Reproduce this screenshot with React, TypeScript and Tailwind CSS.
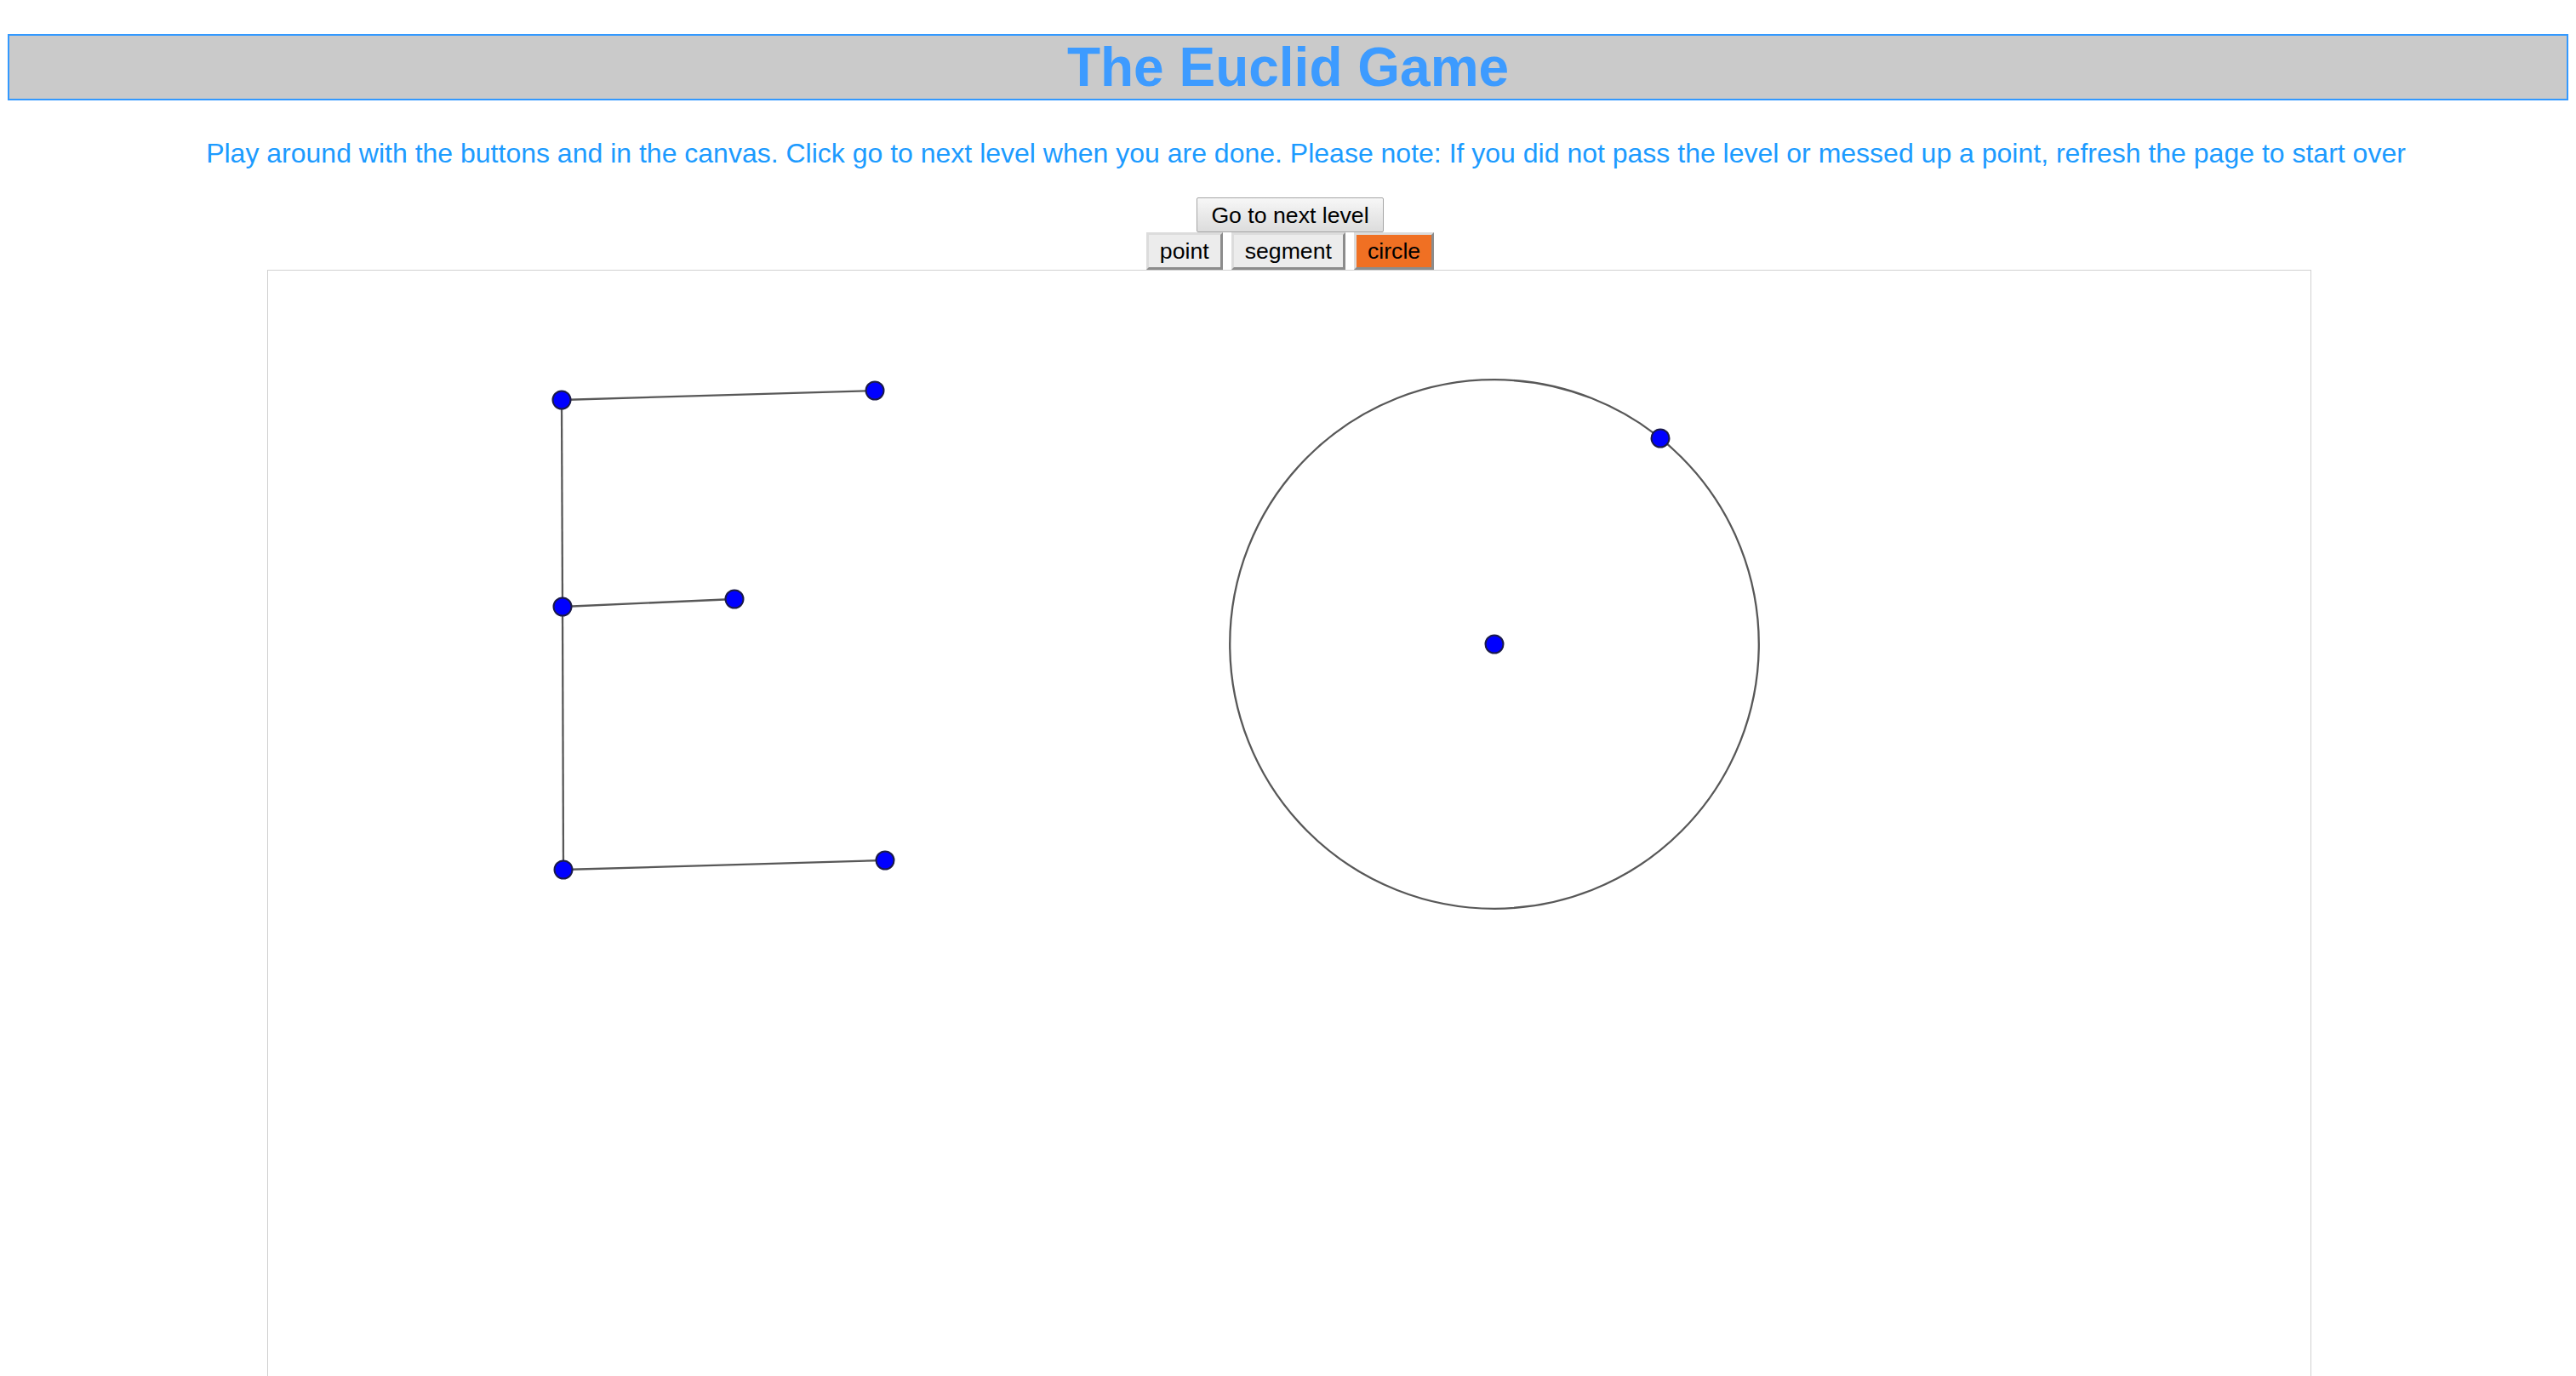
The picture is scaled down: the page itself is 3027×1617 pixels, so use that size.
const points: [number, number][] = [
  [345, 152],
  [713, 141],
  [346, 395],
  [548, 386],
  [347, 704],
  [725, 693],
  [1441, 439],
  [1636, 197],
];

const segments: [number, number][] = [
  [0, 1],
  [0, 2],
  [2, 3],
  [2, 4],
  [4, 5],
];

export default function App() {
  const center = points[6];
  const edge = points[7];
  const radius = Math.hypot(edge[0] - center[0], edge[1] - center[1]);

  return (
    <main className="bg-white min-h-screen font-['Liberation_Sans',Arial,sans-serif] overflow-hidden">
      {/* Title bar */}
      <header className="mx-[9px] mt-[40px] bg-[#cacaca] border-2 border-[#3399ff]">
        <h1 className="text-center text-[64px] leading-[73px] font-bold text-[#3d9bff] pt-[1px]">
          The Euclid Game
        </h1>
      </header>

      <p className="mt-[44px] pl-[42px] text-center text-[32px] leading-[37px] text-[#1c9bff]">
        Play around with the buttons and in the canvas. Click go to next level
        when you are done. Please note: If you did not pass the level or messed
        up a point, refresh the page to start over
      </p>

      <div className="mt-[33px] pl-[5px] flex justify-center">
        <button className="h-[41px] px-[16px] text-[26.67px] leading-[30px] text-black border border-[#a5a5a5] rounded-[2px] bg-gradient-to-b from-[#f7f7f7] to-[#dcdcdc]">
          Go to next level
        </button>
      </div>

      <div className="pl-[5px] flex justify-center gap-[10px]">
        <button className="h-[44px] px-[13px] text-[26.67px] leading-[30px] text-black bg-[#ececec] border-[3px] border-t-[#dcdcdc] border-l-[#dcdcdc] border-b-[#8c8c8c] border-r-[#8c8c8c]">
          point
        </button>
        <button className="h-[44px] px-[13px] text-[26.67px] leading-[30px] text-black bg-[#ececec] border-[3px] border-t-[#dcdcdc] border-l-[#dcdcdc] border-b-[#8c8c8c] border-r-[#8c8c8c]">
          segment
        </button>
        <button className="h-[44px] px-[13px] text-[26.67px] leading-[30px] text-black bg-[#f07023] border-[3px] border-t-[#dcdcdc] border-l-[#dcdcdc] border-b-[#8c8c8c] border-r-[#8c8c8c]">
          circle
        </button>
      </div>

      {/* Drawing canvas */}
      <div className="ml-[314px] w-[2402px] h-[1400px] border border-[#d0d0d0] bg-white">
        <svg width="2400" height="1400" viewBox="0 0 2400 1400">
          <circle
            cx={center[0]}
            cy={center[1]}
            r={radius}
            fill="none"
            stroke="#585858"
            strokeWidth="2.3"
          />
          {segments.map(([a, b], i) => (
            <line
              key={i}
              x1={points[a][0]}
              y1={points[a][1]}
              x2={points[b][0]}
              y2={points[b][1]}
              stroke="#585858"
              strokeWidth="2.3"
            />
          ))}
          {points.map(([x, y], i) => (
            <circle
              key={i}
              cx={x}
              cy={y}
              r="10.5"
              fill="#0000ff"
              stroke="#1a1a4a"
              strokeWidth="2"
            />
          ))}
        </svg>
      </div>
    </main>
  );
}
